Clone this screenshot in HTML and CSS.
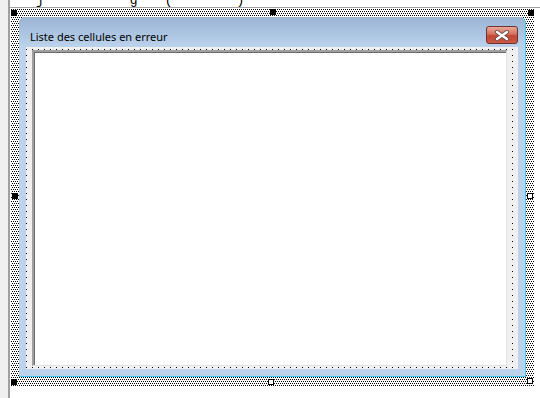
FILE: index.html
```html
<!DOCTYPE html>
<html>
<head>
<meta charset="utf-8">
<link rel="stylesheet" href="styles.css">
</head>
<body>
<div class="ide">
  <div class="side">
    <div class="side-box"></div>
  </div>
  <div class="pane">
    <div class="codeline"><span class="frag f1">j</span><span class="frag f2">g</span><span class="frag f3">(</span><span class="frag f4">)</span></div>
    <div class="designer">
      <div class="selection">
        <div class="form">
          <div class="titlebar">
            <span class="title">Liste des cellules en erreur</span>
            <div class="close">
              <svg width="16" height="11" viewBox="0 0 16 11">
                <path d="M3 2 L13 9 M13 2 L3 9" stroke="#6a5250" stroke-width="4" stroke-linecap="round"/>
                <path d="M3 2 L13 9 M13 2 L3 9" stroke="#ffffff" stroke-width="2.2" stroke-linecap="round"/>
              </svg>
            </div>
          </div>
          <div class="client">
            <div class="listbox"></div>
          </div>
        </div>
        <span class="handle black h-tl"></span>
        <span class="handle black h-tm"></span>
        <span class="handle black h-tr"></span>
        <span class="handle black h-ml"></span>
        <span class="handle white h-mr"></span>
        <span class="handle black h-bl"></span>
        <span class="handle white h-bm"></span>
        <span class="handle white h-br"></span>
      </div>
    </div>
  </div>
</div>
</body>
</html>
```

FILE: styles.css
```css
html, body {
  margin: 0;
  padding: 0;
  background: #ffffff;
}
body {
  width: 540px;
  height: 398px;
  overflow: hidden;
  font-family: "Noto Sans", "Open Sans", sans-serif;
}
.ide {
  display: flex;
  width: 540px;
  height: 398px;
}
.side {
  width: 8px;
  background: #f0f0f0;
  border-right: 2px solid #a0a0a0;
  flex: none;
}
.pane {
  flex: 1;
  display: flex;
  flex-direction: column;
}
.codeline {
  height: 7px;
  border-bottom: 1px solid #a0a0a0;
  overflow: hidden;
  font-family: "Liberation Mono", monospace;
  font-size: 13px;
  line-height: 1px;
  display: flex;
}
.frag {
  display: block;
  color: #000;
}
.f1 { margin-left: 26px; }
.f2 { margin-left: 86px; }
.f3 { margin-left: 27px; }
.f4 { margin-left: 64px; }
.designer {
  flex: 1;
  padding: 1px 0 0 1px;
}
.selection {
  position: relative;
  width: 507px;
  height: 360px;
  padding: 8px 8px 9px 8px;
  background-color: #ffffff;
  background-image: conic-gradient(from 270deg at 1px 1px, #000 0 25%, transparent 0),
                    conic-gradient(from 270deg at 1px 1px, #000 0 25%, transparent 0);
  background-size: 2px 4px, 2px 4px;
  background-position: 0 0, 1px 2px;
}
.form {
  width: 507px;
  height: 360px;
  display: flex;
  flex-direction: column;
  background: #bcd3eb;
  border-radius: 6px 6px 0 0;
  box-sizing: border-box;
  border-right: 1px solid #3ec4ec;
  border-bottom: 1px solid #3ec4ec;
}
.titlebar {
  height: 30px;
  flex: none;
  display: flex;
  align-items: flex-start;
  justify-content: space-between;
  background: linear-gradient(#9ab4d3, #b0c9e5 70%, #bcd3eb);
  border-radius: 6px 6px 0 0;
  padding: 0 7px 0 11px;
}
.title {
  font-size: 11px;
  line-height: 14px;
  margin-top: 13px;
  color: #000;
}
.close {
  width: 30px;
  height: 16px;
  margin-top: 9px;
  border: 1px solid #6e3330;
  border-radius: 3px;
  background: linear-gradient(#eaa999, #d6705f 45%, #c24432 55%, #cc5a44);
  display: flex;
  align-items: center;
  justify-content: center;
}
.close svg { display: block; }
.client {
  flex: 1;
  margin: 0 7px 7px 7px;
  background-color: #f0f0f0;
  background-image: conic-gradient(from 270deg at 1px 1px, #000 0 25%, transparent 0);
  background-size: 6px 6px;
  background-position: 0 2px;
  padding: 3px 11px 3px 6px;
  display: flex;
}
.listbox {
  flex: 1;
  background: #ffffff;
  border-top: 2px solid #a0a0a0;
  border-left: 2px solid #a0a0a0;
  border-right: 1px solid #e3e3e3;
  border-bottom: 1px solid #e3e3e3;
  box-shadow: inset 1px 1px 0 #696969;
}
.handle {
  position: absolute;
  width: 6px;
  height: 6px;
  box-sizing: border-box;
}
.handle.black { background: #000; }
.handle.white { background: #fff; border: 1px solid #000; }
.h-tl { left: 0; top: 1px; }
.h-tm { left: 259px; top: 0; }
.h-tr { left: 517px; top: 1px; }
.h-ml { left: 1px; top: 184px; }
.h-mr { left: 516px; top: 184px; }
.h-bl { left: 0; top: 370px; }
.h-bm { left: 257px; top: 370px; }
.h-br { left: 516px; top: 369px; }
```
